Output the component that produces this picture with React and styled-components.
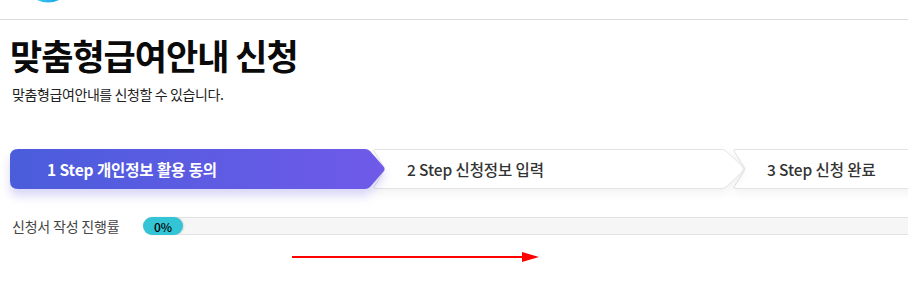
import React from "react";
import styled, { createGlobalStyle } from "styled-components";

const GlobalStyle = createGlobalStyle`
  html, body {
    margin: 0;
    padding: 0;
    background: #fff;
    overflow: hidden;
  }
  body {
    font-family: "Noto Sans CJK KR", "Noto Sans", sans-serif;
    color: #111;
  }
`;

const Header = styled.header`
  height: 19px;
  border-bottom: 1px solid #dcdcdc;
  padding-left: 37px;
  overflow: hidden;
  svg {
    display: block;
  }
`;

const Main = styled.main`
  padding: 0 0 0 10px;
`;

const Title = styled.h1`
  margin: 13px 0 0 0;
  font-size: 35px;
  line-height: 44px;
  font-weight: 700;
  letter-spacing: -1px;
  color: #0a0a0a;
`;

const SubTitle = styled.p`
  margin: 8px 0 0 2px;
  font-size: 14px;
  line-height: 18px;
  letter-spacing: -0.4px;
  color: #222;
`;

const Steps = styled.ol`
  display: flex;
  list-style: none;
  margin: 46px 0 0 0;
  padding: 0;
  height: 40px;
`;

const Step = styled.li`
  position: relative;
  flex: 0 0 360px;
  height: 40px;
  z-index: ${(p) => p.$z};
  display: flex;
  align-items: center;
  padding-left: 37px;
  box-sizing: border-box;
  font-size: 15.5px;
  letter-spacing: -0.1px;
  font-weight: ${(p) => (p.$active ? 700 : 500)};
  color: ${(p) => (p.$active ? "#fff" : "#333")};
  span {
    position: relative;
  }
`;

const StepShape = styled.svg`
  position: absolute;
  left: 0;
  top: 0;
  overflow: visible;
  filter: ${(p) =>
    p.$active
      ? "drop-shadow(0 7px 5px rgba(110, 100, 220, 0.26))"
      : "drop-shadow(0 4px 4px rgba(0, 0, 0, 0.05))"};
`;

const ProgressRow = styled.div`
  display: flex;
  align-items: center;
  margin-top: 27px;
  padding-left: 2px;
`;

const ProgressLabel = styled.span`
  flex: 0 0 131px;
  font-size: 14px;
  letter-spacing: -0.2px;
  color: #444;
`;

const Track = styled.div`
  flex: 1;
  height: 16px;
  background: #f6f6f6;
  border-top: 1px solid #e2e2e2;
  border-bottom: 1px solid #e2e2e2;
  border-radius: 9px 0 0 9px;
  display: flex;
  align-items: center;
`;

const Fill = styled.div`
  width: 40px;
  height: 18px;
  border-radius: 9px;
  background: #33c4d5;
  box-shadow: 1px 0 2px rgba(0, 0, 0, 0.12);
  font-size: 12px;
  font-weight: 500;
  color: #000;
  display: flex;
  align-items: center;
  justify-content: center;
`;

const Annotation = styled.svg`
  display: block;
  margin: 15px 0 0 282px;
`;

const firstPath =
  "M8,0 H355 Q358,0 360,2 L373,17 Q376,20 373,23 L360,38 Q358,40 355,40 H8 Q0,40 0,32 V8 Q0,0 8,0 Z";
const nextPath =
  "M6,0.5 H352 Q354,0.5 356,2 L372,17 Q375,20 372,23 L356,38 Q354,39.5 352,39.5 H6 Q3,39.5 4,38 L14,22 Q15,20 14,18 L4,2 Q3,0.5 6,0.5 Z";

const steps = [
  { label: "1 Step 개인정보 활용 동의", active: true },
  { label: "2 Step 신청정보 입력", active: false },
  { label: "3 Step 신청 완료", active: false },
];

function App() {
  return (
    <>
      <GlobalStyle />
      <Header>
        <svg width="22" height="3" viewBox="0 0 22 3">
          <defs>
            <linearGradient id="logo" x1="0" x2="1" y1="0" y2="0">
              <stop offset="0" stopColor="#35c8f0" />
              <stop offset="1" stopColor="#1aa4ec" />
            </linearGradient>
          </defs>
          <path d="M0,0 Q11,5 22,0 Z" fill="url(#logo)" />
        </svg>
      </Header>
      <Main>
        <Title>맞춤형급여안내 신청</Title>
        <SubTitle>맞춤형급여안내를 신청할 수 있습니다.</SubTitle>
        <Steps>
          {steps.map((s, i) => (
            <Step key={s.label} $active={s.active} $z={3 - i}>
              <StepShape $active={s.active} width="380" height="40" viewBox="0 0 380 40">
                <defs>
                  <linearGradient id="stepGrad" x1="0" x2="1" y1="0" y2="0">
                    <stop offset="0" stopColor="#4a5ddb" />
                    <stop offset="1" stopColor="#6f5ae9" />
                  </linearGradient>
                </defs>
                {s.active ? (
                  <path d={firstPath} fill="url(#stepGrad)" />
                ) : (
                  <path d={nextPath} fill="#fff" stroke="#e3e3e3" strokeWidth="1" />
                )}
              </StepShape>
              <span>{s.label}</span>
            </Step>
          ))}
        </Steps>
        <ProgressRow>
          <ProgressLabel>신청서 작성 진행률</ProgressLabel>
          <Track>
            <Fill>0%</Fill>
          </Track>
        </ProgressRow>
        <Annotation width="248" height="12" viewBox="0 0 248 12">
          <line x1="0" y1="6" x2="232" y2="6" stroke="#ff0000" strokeWidth="2" />
          <path d="M230,1 L247,6 L230,11 Z" fill="#ff0000" />
        </Annotation>
      </Main>
    </>
  );
}

export default App;
